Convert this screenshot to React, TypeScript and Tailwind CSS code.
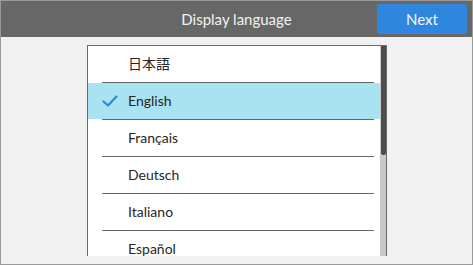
import React from "react";

const langs = ["日本語", "English", "Français", "Deutsch", "Italiano", "Español"];

function Check() {
  return (
    <svg width="16" height="12" viewBox="0 0 16 12" className="block">
      <path d="M1.5 6.5 L6 10.5 L14.5 1.5" fill="none" stroke="#2e86de" strokeWidth="2.2" strokeLinecap="round" strokeLinejoin="round" />
    </svg>
  );
}

export default function App() {
  return (
    <div
      className="w-[473px] h-[265px] border border-[#9a9a9a] bg-[#f1f1f1] flex flex-col overflow-hidden"
      style={{ fontFamily: "Lato, 'Noto Sans CJK JP', sans-serif" }}
    >
      <div className="h-[36px] shrink-0 bg-[#676767] grid grid-cols-[1fr_auto_1fr] items-center">
        <div />
        <div className="text-[15px] text-[#f2f2f2] leading-none">Display language</div>
        <div className="flex justify-end pr-[5px]">
          <button className="w-[90px] h-[30px] rounded-[3px] bg-[#2e86de] text-[#f4f8fd] text-[15px] leading-none">
            Next
          </button>
        </div>
      </div>
      <div className="flex-1 pt-[8px] pl-[86px] pb-[8px] min-h-0">
        <div className="w-[300px] h-full border-t border-l border-r border-[#6a6a6a] bg-white flex overflow-hidden">
          <div className="flex-1 flex flex-col">
            {langs.map((l, i) => (
              <div key={l} className="shrink-0 flex flex-col">
                <div
                  className={`h-[36px] flex items-center text-[14px] text-[#262626] ${
                    i === 1 ? "bg-[#a9e2f1]" : ""
                  }`}
                >
                  <div className="w-[40px] flex justify-center pl-[4px]">{i === 1 ? <Check /> : null}</div>
                  <span className="pb-[2px]">{l}</span>
                </div>
                <div className="h-px flex pl-[14px] pr-[6px]">
                  <div className="flex-1 bg-[#666]" />
                </div>
              </div>
            ))}
          </div>
          <div className="w-[6px] bg-[#c8c8c8] flex flex-col pl-[1px]">
            <div className="h-[109px] bg-[#4d4d4d] rounded-b-[2px]" />
          </div>
        </div>
      </div>
    </div>
  );
}
